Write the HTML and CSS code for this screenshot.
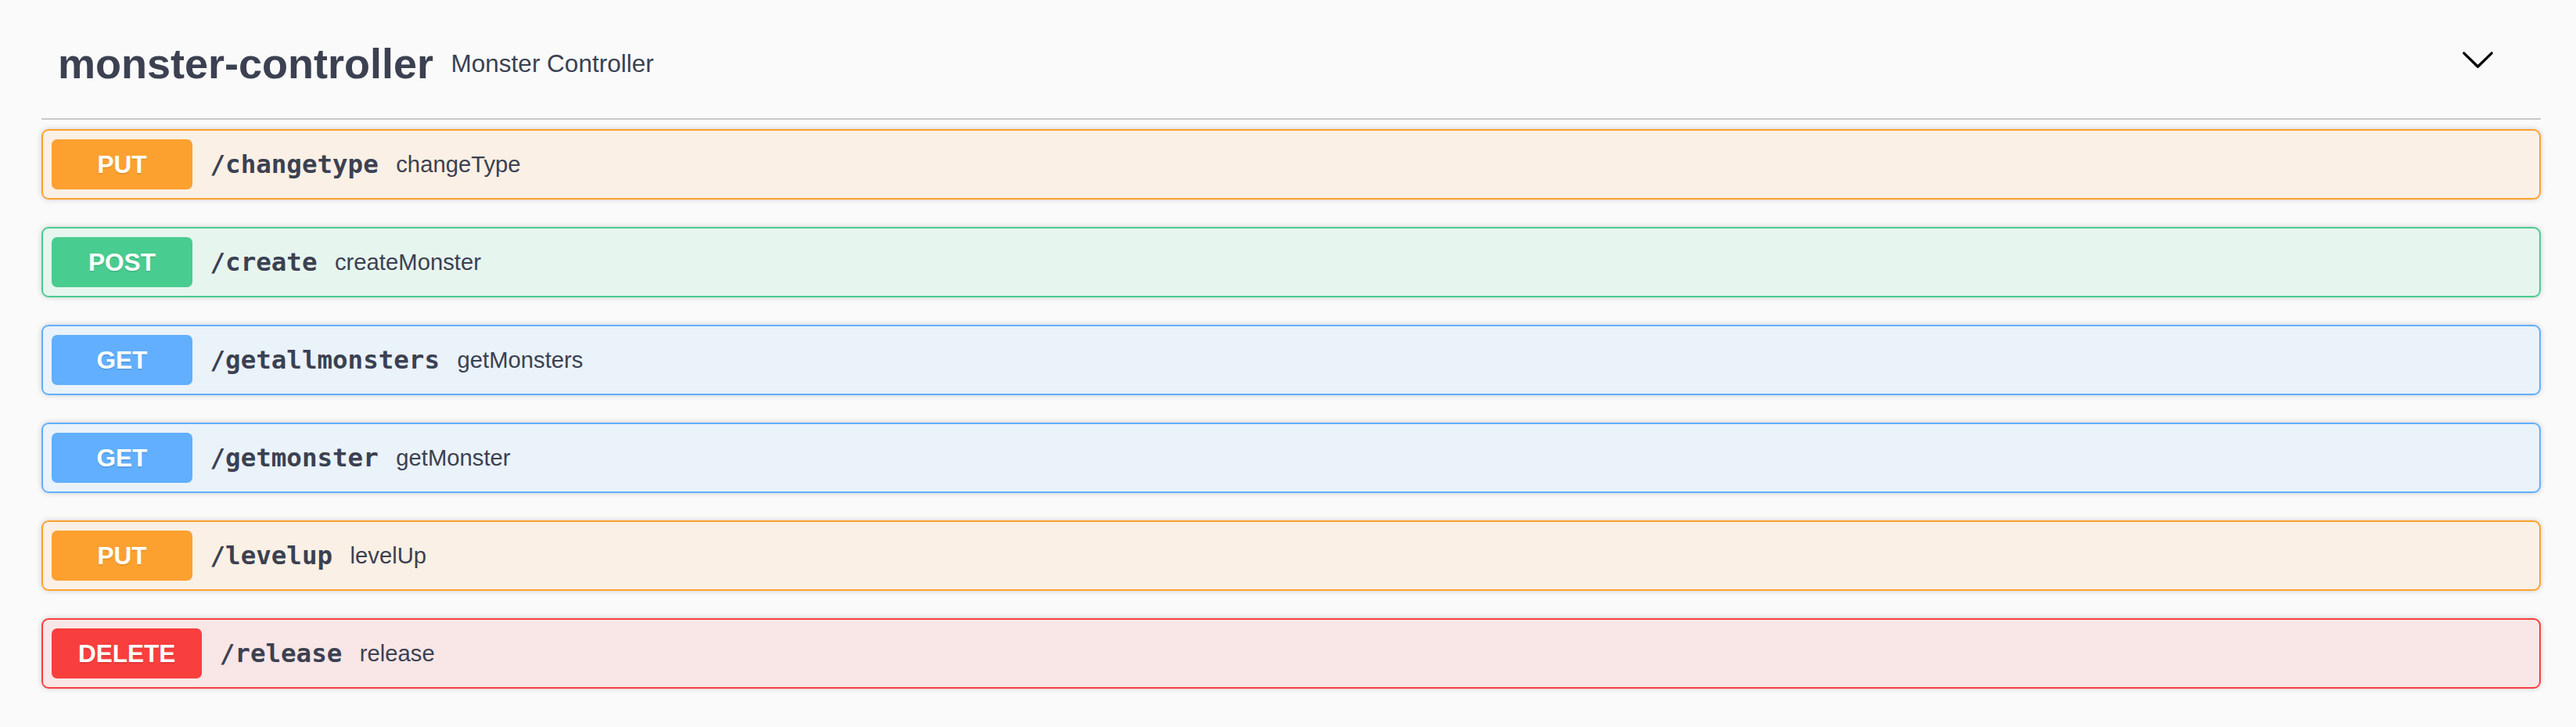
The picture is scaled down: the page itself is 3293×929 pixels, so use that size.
FILE: index.html
```html
<!DOCTYPE html>
<html lang="en">
<head>
<meta charset="utf-8">
<title>monster-controller</title>
<link rel="stylesheet" href="styles.css">
</head>
<body>
<div class="wrapper">
  <section class="tag-section">
    <div class="tag-header">
      <h4 class="tag-name">monster-controller</h4>
      <small class="tag-desc">Monster Controller</small>
      <button class="expand-btn" type="button" aria-label="Collapse">
        <svg class="arrow" viewBox="0 0 20 20" width="45" height="45" aria-hidden="true">
          <path d="M17.418 6.109c.272-.268.709-.268.979 0s.271.701 0 .969l-7.908 7.83c-.27.268-.707.268-.979 0l-7.908-7.83c-.27-.268-.27-.701 0-.969.271-.268.709-.268.979 0L10 13.25l7.418-7.141z"/>
        </svg>
      </button>
    </div>
    <div class="ops">
      <div class="opblock opblock-put">
        <div class="summary">
          <span class="method">PUT</span>
          <span class="path">/changetype</span>
          <span class="desc">changeType</span>
        </div>
      </div>
      <div class="opblock opblock-post">
        <div class="summary">
          <span class="method">POST</span>
          <span class="path">/create</span>
          <span class="desc">createMonster</span>
        </div>
      </div>
      <div class="opblock opblock-get">
        <div class="summary">
          <span class="method">GET</span>
          <span class="path">/getallmonsters</span>
          <span class="desc">getMonsters</span>
        </div>
      </div>
      <div class="opblock opblock-get">
        <div class="summary">
          <span class="method">GET</span>
          <span class="path">/getmonster</span>
          <span class="desc">getMonster</span>
        </div>
      </div>
      <div class="opblock opblock-put">
        <div class="summary">
          <span class="method">PUT</span>
          <span class="path">/levelup</span>
          <span class="desc">levelUp</span>
        </div>
      </div>
      <div class="opblock opblock-delete">
        <div class="summary">
          <span class="method">DELETE</span>
          <span class="path">/release</span>
          <span class="desc">release</span>
        </div>
      </div>
    </div>
  </section>
</div>
</body>
</html>
```
FILE: styles.css
```css
* {
  box-sizing: border-box;
}

html, body {
  margin: 0;
  padding: 0;
  background: #fafafa;
}

body {
  font-family: "Liberation Sans", Arial, sans-serif;
  color: #3b4151;
}

.wrapper {
  padding: 0 45px 0 53px;
}

.tag-section {
  display: flex;
  flex-direction: column;
}

.tag-header {
  display: flex;
  align-items: center;
  padding: 50px 58px 39px 21px;
  border-bottom: 2px solid #c8c9cc;
  margin-bottom: 12px;
}

.tag-name {
  margin: 0;
  font-size: 54px;
  font-weight: 700;
  line-height: normal;
  color: #3b4151;
}

.tag-desc {
  flex: 1;
  padding: 0 22.5px;
  font-size: 31.5px;
  color: #3b4151;
}

.expand-btn {
  display: flex;
  margin: 0 0 12px 0;
  padding: 0;
  border: none;
  background: transparent;
}

.arrow {
  display: block;
  fill: #000;
}

.ops {
  display: flex;
  flex-direction: column;
}

.opblock {
  border: 2px solid #000;
  border-radius: 9px;
  box-shadow: 0 0 7px rgba(0, 0, 0, 0.19);
  margin-bottom: 35px;
}

.summary {
  display: flex;
  align-items: center;
  padding: 11px;
}

.method {
  min-width: 180px;
  padding: 14px 34px;
  border-radius: 7px;
  font-size: 31.5px;
  line-height: 36px;
  font-weight: 700;
  color: #fff;
  text-align: center;
  text-shadow: 0 2px 0 rgba(0, 0, 0, 0.1);
}

.path {
  padding: 0 22.5px;
  font-family: "DejaVu Sans Mono", "Liberation Mono", monospace;
  font-size: 32.5px;
  font-weight: 700;
  color: #3b4151;
}

.desc {
  flex: 1 1 auto;
  font-size: 29.25px;
  color: #3b4151;
}

.opblock-put {
  border-color: #fca130;
  background: rgba(252, 161, 48, 0.1);
}
.opblock-put .method {
  background: #fca130;
}

.opblock-post {
  border-color: #49cc90;
  background: rgba(73, 204, 144, 0.1);
}
.opblock-post .method {
  background: #49cc90;
}

.opblock-get {
  border-color: #61affe;
  background: rgba(97, 175, 254, 0.1);
}
.opblock-get .method {
  background: #61affe;
}

.opblock-delete {
  border-color: #f93e3e;
  background: rgba(249, 62, 62, 0.1);
}
.opblock-delete .method {
  background: #f93e3e;
}
```
